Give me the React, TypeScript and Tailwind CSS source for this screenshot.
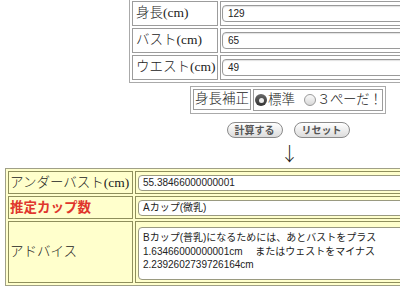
import React from "react";

const jp = "font-['Liberation_Serif','Noto_Sans_CJK_JP',serif] font-light";
const ui = "font-['Liberation_Sans','Noto_Sans_CJK_JP',sans-serif]";

function Field({ value }: { value: string }) {
  return (
    <div
      className={`${ui} flex h-[17px] w-full items-center rounded-[4px] border border-[#9a9a9a] bg-white pl-[5px] text-[10px] text-[#222] shadow-[inset_0_1px_1px_rgba(0,0,0,0.12)]`}
    >
      {value}
    </div>
  );
}

function TopRow({ label, value }: { label: string; value: string }) {
  return (
    <div className="flex h-[25px] gap-[2px]">
      <div className={`${jp} flex w-[86px] items-center whitespace-nowrap border border-[#9c9c9c] pl-[3px] text-[13.5px] text-[#222]`}>
        {label}
      </div>
      <div className="flex flex-1 items-center border border-[#9c9c9c] px-[1px]">
        <Field value={value} />
      </div>
    </div>
  );
}

function Radio({ checked }: { checked: boolean }) {
  return checked ? (
    <span className="inline-flex h-[12px] w-[12px] items-center justify-center rounded-full bg-gradient-to-b from-[#6a6a6a] to-[#333]">
      <span className="h-[5px] w-[5px] rounded-full bg-[#eee]" />
    </span>
  ) : (
    <span className="inline-block h-[12px] w-[12px] rounded-full border border-[#9a9a9a] bg-gradient-to-b from-[#fafafa] to-[#d8d8d8]" />
  );
}

function PillButton({ children }: { children: React.ReactNode }) {
  return (
    <button className="flex h-[16px] w-[56px] items-center justify-center rounded-full border border-[#8a8a8a] bg-gradient-to-b from-white to-[#dcdcdc] font-['Noto_Sans_CJK_JP',sans-serif] text-[10px] font-bold leading-none text-[#555]">
      {children}
    </button>
  );
}

export default function App() {
  return (
    <div className="h-[294px] w-[400px] overflow-hidden bg-white">
      <div className="flex w-[576px] flex-col items-center">
        {/* input table */}
        <div className="-mt-[2px] flex w-[318px] flex-col gap-[2px] border border-[#aaa] p-[2px]">
          <TopRow label="身長(cm)" value="129" />
          <TopRow label="バスト(cm)" value="65" />
          <TopRow label="ウエスト(cm)" value="49" />
        </div>

        {/* height correction */}
        <div className="mt-[3px] flex w-[196px] gap-[2px] border border-[#aaa] p-[2px]">
          <div className={`${jp} flex h-[21px] w-[59px] items-center whitespace-nowrap border border-[#9c9c9c] pl-[1px] text-[13.5px] text-[#222]`}>
            身長補正
          </div>
          <div className={`${jp} flex flex-1 items-center whitespace-nowrap border border-[#9c9c9c] pl-[1px] text-[13.5px] text-[#222]`}>
            <Radio checked />
            <span className="ml-[1px]">標準</span>
            <span className="ml-[9px]" />
            <Radio checked={false} />
            <span className="ml-[1px] tracking-[-0.5px]">３ぺーだ！</span>
          </div>
        </div>

        <div className="mt-[8px] flex gap-[11px]">
          <PillButton>計算する</PillButton>
          <PillButton>リセット</PillButton>
        </div>

        <div className="ml-[3px] flex h-[29px] items-center justify-center font-['Noto_Sans_CJK_JP',sans-serif] text-[19px] font-light leading-none text-[#222]">
          ↓
        </div>

        {/* result table */}
        <div className="mt-[1px] flex w-[566px] flex-col gap-[2px] border border-[#a0a088] bg-[#ffffcc] p-[2px]">
          <div className="flex h-[23px] gap-[2px]">
            <div className={`${jp} flex w-[125px] items-center whitespace-nowrap border border-[#8f8f5c] bg-[#ffffcc] pl-[1px] text-[13.5px] text-[#222]`}>
              アンダーバスト(cm)
            </div>
            <div className="flex flex-1 items-center border border-[#8f8f5c] bg-[#ffffcc] pl-[2px]">
              <div className={`${ui} flex h-[16px] w-full items-center rounded-[4px] border border-[#9a9a80] bg-white pl-[4px] text-[10px] text-[#222]`}>
                55.38466000000001
              </div>
            </div>
          </div>
          <div className="flex h-[23px] gap-[2px]">
            <div className="flex w-[125px] items-center whitespace-nowrap border border-[#8f8f5c] bg-[#ffffcc] pl-[1px] font-['Liberation_Serif','Noto_Sans_CJK_JP',serif] text-[13.5px] font-bold text-[#e0362c]">
              推定カップ数
            </div>
            <div className="flex flex-1 items-center border border-[#8f8f5c] bg-[#ffffcc] pl-[2px]">
              <div className={`${ui} flex h-[16px] w-full items-center rounded-[4px] border border-[#9a9a80] bg-white pl-[4px] text-[10px] text-[#222]`}>
                Aカップ(微乳)
              </div>
            </div>
          </div>
          <div className="flex h-[62px] gap-[2px]">
            <div className={`${jp} flex w-[125px] items-center whitespace-nowrap border border-[#8f8f5c] bg-[#ffffcc] pl-[1px] text-[13.5px] text-[#222]`}>
              アドバイス
            </div>
            <div className="flex flex-1 items-start border border-[#8f8f5c] bg-[#ffffcc] pl-[2px] pt-[5px]">
              <div className={`${ui} h-[53px] w-full rounded-[4px] border border-[#9a9a80] bg-white pl-[4px] pt-[3px] text-[10px] leading-[13.5px] text-[#222]`}>
                <div>Bカップ(普乳)になるためには、あとバストをプラス</div>
                <div className="whitespace-pre">1.63466000000001cm　 またはウェストをマイナス</div>
                <div>2.2392602739726164cm</div>
              </div>
            </div>
          </div>
        </div>
      </div>
    </div>
  );
}
